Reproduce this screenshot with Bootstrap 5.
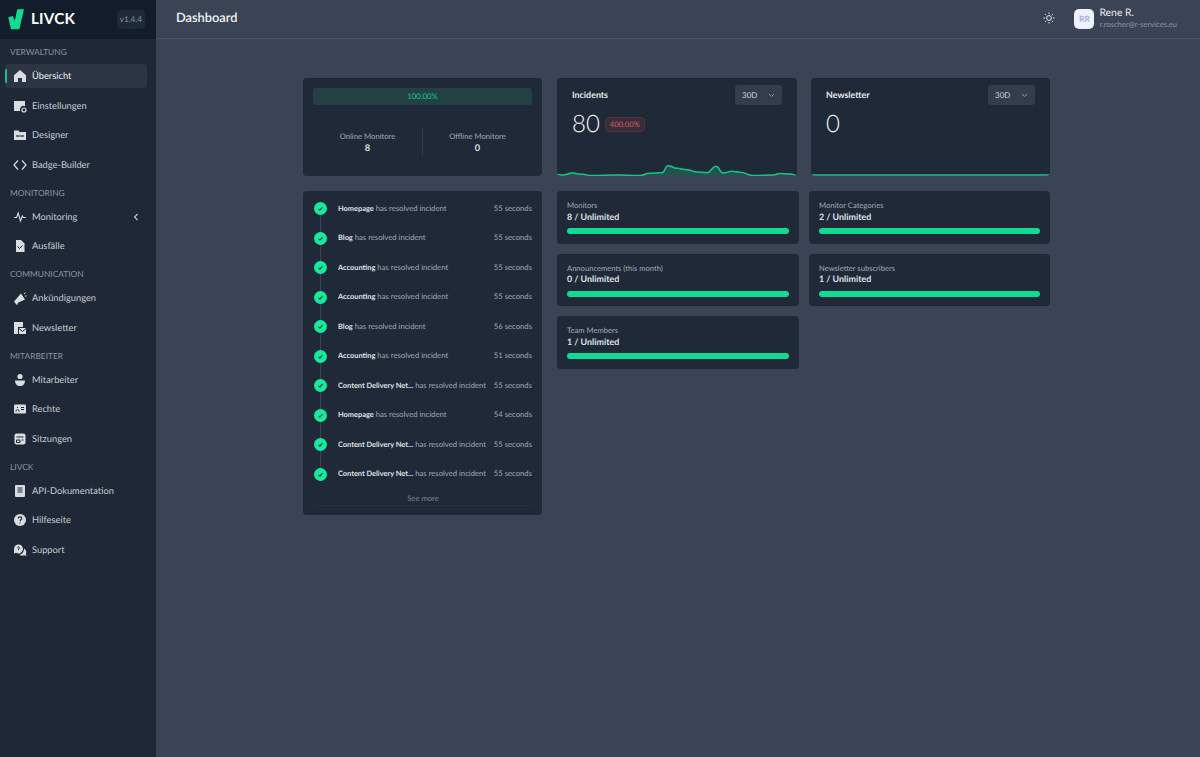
<!DOCTYPE html>
<html lang="en">

<head>
    <meta charset="UTF-8">
    <meta name="viewport" content="width=device-width, initial-scale=1.0">
    <title>Dashboard</title>
    <link rel="stylesheet" href="https://cdn.jsdelivr.net/npm/bootstrap@5.3.2/dist/css/bootstrap.min.css">
    <script src="https://cdn.jsdelivr.net/npm/bootstrap@5.3.2/dist/js/bootstrap.bundle.min.js"></script>

    <style>
        html, body { height: 100%; }
        body {
            margin: 0;
            background: #3a4454;
            font-family: "Lato", "Noto Sans", sans-serif;
            color: #dfe3e8;
            overflow: hidden;
            text-rendering: geometricPrecision;
        }
        .shell { height: 757px; }

        /* sidebar */
        .side { width: 156px; background: #1e2836; flex: none; }
        .brand { height: 39px; background: #131c2b; padding: 0 11px 0 8px; }
        .brand-name { font-size: 15.2px; font-weight: 700; color: #fff; letter-spacing: .2px; margin-left: 6px; }
        .ver { font-size: 8.2px; color: #8b95a3; background: #1e2a39; border-radius: 4px; padding: 3px 3px; }
        .side-head { font-size: 8.4px; color: #8b95a3; padding: 0 10px; height: 11.5px; line-height: 11.5px; text-transform: uppercase; }
        .side-link {
            height: 24px; margin: 0 9px 0 5px; padding: 0 8px; border-radius: 4px;
            font-size: 9.3px; color: #c6ccd4; text-decoration: none;
        }
        .side-link svg.ico { width: 14px; height: 14px; margin-right: 5px; flex: none; fill: #d8dde3; }
        .side-link.on { background: #2b3544; color: #eef0f3; position: relative; }
        .side-link.on::before {
            content: ""; position: absolute; left: 0; top: 5px; width: 2px; height: 14px;
            background: #10c58a; border-radius: 1px;
        }
        .nav-stack { padding-top: 8px; }
        .nav-group { margin-bottom: 11px; }
        .nav-group .side-link { margin-top: 5.5px; }

        /* top bar */
        .topbar { height: 39px; border-bottom: 1px solid #4a5362; padding: 0 23px 2px 20px; }
        .page-title { font-size: 12.8px; font-weight: 600; color: #f0f2f4; }
        .sun { margin-right: 19px; }
        .avatar { width: 20px; height: 20px; border-radius: 5px; background: #eef2ff; color: #8ea0e6; font-size: 8.6px; margin-top: 2px; margin-right: 5px; }
        .user-name { font-size: 10.4px; line-height: 12px; color: #e4e7eb; }
        .user-mail { font-size: 7.6px; line-height: 10px; color: #8b95a3; }

        /* dashboard */
        .dash { width: 747px; margin: 39px 0 0 147px; display: grid; grid-template-columns: 239px 494px; column-gap: 15px; align-items: start; }
        .tile { background: #1f2937; border-radius: 4px; }
        .uptime { height: 98px; padding: 10px; }
        .up-bar { height: 17px; background: #234042; border-radius: 3px; color: #10c58a; font-size: 7.8px; }
        .pair { margin-top: 22px; }
        .pair > div { flex: 1; height: 29px; padding-top: 3px; }
        .pair > div + div { border-left: 1px solid #323c4b; }
        .pair-label { font-size: 7.7px; line-height: 12px; color: #a3abb6; }
        .pair-val { font-size: 9.2px; line-height: 12px; font-weight: 700; color: #dfe3e8; }

        .feed { margin-top: 15px; padding: 3px 10px 6px 11px; height: 324px; }
        .feed-row { height: 29.5px; position: relative; font-size: 7.7px; color: #a3abb6; }
        .feed-row strong { color: #dfe3e8; font-weight: 700; font-size: 7.4px; }
        .feed-row:not(:nth-last-child(2))::after {
            content: ""; position: absolute; left: 6px; top: 20px; width: 1px; height: 20px; background: #3a4454;
        }
        .tick { width: 13px; height: 13px; border-radius: 50%; background: #14eb9f; margin-right: 11px; flex: none; position: relative; z-index: 1; }
        .feed-text { flex: 1; white-space: nowrap; overflow: hidden; }
        .see-more { font-size: 7.7px; color: #7e8794; border-bottom: 1px solid #263140; height: 16px; line-height: 16px; margin-top: 1px; }

        .stats { display: grid; grid-template-columns: 240px 239px; column-gap: 14px; }
        .stat { height: 98px; position: relative; overflow: hidden; padding: 7px 15px; }
        .stat-title { font-size: 8.9px; font-weight: 700; color: #e4e7eb; }
        .range { width: 47px; height: 20px; background: #333d4c; border-radius: 3px; font-size: 8px; color: #c6ccd4; padding: 0 7px; }
        .stat-num { font-size: 24px; line-height: 28px; color: #f3f4f6; font-weight: 300; margin-top: 5px; }
        .pct { font-size: 7.6px; color: #d9596a; background: #3a2c38; border: 1px solid #4a3440; border-radius: 4px; padding: 1px 4px; margin: 6px 0 0 5px; }
        .spark { position: absolute; left: 0; bottom: 0; width: 100%; height: 24px; display: block; }

        .limits { margin-top: 15px; display: grid; grid-template-columns: 242px 241px; column-gap: 10px; row-gap: 10px; }
        .limit { height: 52.5px; padding: 9px 10px 0; }
        .limit-label { font-size: 7.6px; line-height: 10.5px; color: #a3abb6; }
        .limit-val { font-size: 8.9px; line-height: 11px; font-weight: 700; color: #dfe3e8; }
        .limit-track { height: 6px; margin-top: 6.5px; background: #0fdc92; border-radius: 3px; }
    </style>
</head>

<body>
    <div class="shell d-flex">
        <!-- Sidebar -->
        <aside class="side d-flex flex-column">
            <div class="brand d-flex align-items-center">
                <svg width="17" height="21" viewBox="0 0 17 21"><path d="M.3 8.3 4.7 7 6.7 11.7 9.3 .3H16L11.3 20.3H3Z" fill="#10dc92"/></svg>
                <span class="brand-name">LIVCK</span>
                <span class="ver ms-auto">v1.4.4</span>
            </div>
            <nav class="nav-stack">
                <div class="nav-group">
                    <div class="side-head">Verwaltung</div>
                    <a class="side-link on d-flex align-items-center" href="#"><svg class="ico" viewBox="0 0 14 14"><path d="M7 1 13 6.2V13H9V9H5V13H1V6.2Z"/></svg>Übersicht</a>
                    <a class="side-link d-flex align-items-center" href="#"><svg class="ico" viewBox="0 0 14 14"><path d="M1 2H12V7.2A3.6 3.6 0 0 0 7.2 12H1Z"/><circle cx="11" cy="11" r="2" fill="none" stroke="#d8dde3" stroke-width="1.2"/></svg>Einstellungen</a>
                    <a class="side-link d-flex align-items-center" href="#"><svg class="ico" viewBox="0 0 14 14"><path d="M1 2.5H5.5L6.5 4H13V12H1Z"/><path d="M4 8H10M4 7V9M10 7V9" stroke="#1e2836" stroke-width="1" fill="none"/></svg>Designer</a>
                    <a class="side-link d-flex align-items-center" href="#"><svg class="ico" viewBox="0 0 14 14"><path d="M5 2.5 1 7 5 11.5M9 2.5 13 7 9 11.5" fill="none" stroke="#d8dde3" stroke-width="1.2"/></svg>Badge-Builder</a>
                </div>
                <div class="nav-group">
                    <div class="side-head">Monitoring</div>
                    <a class="side-link d-flex align-items-center" href="#"><svg class="ico" viewBox="0 0 14 14"><path d="M1 7.5H3.5L5.2 3 7.5 11 9.3 6 10.2 7.5H13" fill="none" stroke="#d8dde3" stroke-width="1.1"/></svg>Monitoring<svg class="ms-auto" width="6" height="8" viewBox="0 0 6 8"><path d="M4.5 1 1.5 4 4.5 7" fill="none" stroke="#c6ccd4" stroke-width="1.1"/></svg></a>
                    <a class="side-link d-flex align-items-center" href="#"><svg class="ico" viewBox="0 0 14 14"><path d="M3 1H8L11.5 4.5V13H3Z"/><path d="M4.5 7.5 6.5 9.5 9.5 6.5" stroke="#1e2836" stroke-width="1" fill="none"/></svg>Ausfälle</a>
                </div>
                <div class="nav-group">
                    <div class="side-head">Communication</div>
                    <a class="side-link d-flex align-items-center" href="#"><svg class="ico" viewBox="0 0 14 14"><path d="M1 10.5 8 2.5 12 8.5 4.5 12 5 13.5 3 13.5 2.4 12.2Z"/><path d="M11 3 12.5 1.5M12 5H13.5" stroke="#d8dde3" fill="none"/></svg>Ankündigungen</a>
                    <a class="side-link d-flex align-items-center" href="#"><svg class="ico" viewBox="0 0 14 14"><path d="M1 1H10V6H5V13H1Z"/><path d="M6 7H13V13H6Z"/><path d="M6 7.5 9.5 10.5 13 7.5" stroke="#1e2836" fill="none"/></svg>Newsletter</a>
                </div>
                <div class="nav-group">
                    <div class="side-head">Mitarbeiter</div>
                    <a class="side-link d-flex align-items-center" href="#"><svg class="ico" viewBox="0 0 14 14"><circle cx="7" cy="3.5" r="2.6"/><path d="M2 7.5H12C12 11 10 13 7 13S2 11 2 7.5Z"/></svg>Mitarbeiter</a>
                    <a class="side-link d-flex align-items-center" href="#"><svg class="ico" viewBox="0 0 14 14"><rect x="1" y="2.5" width="12" height="9" rx="1"/><path d="M3 9.5C3 7 6 7 6 9.5M4.5 5V6M8 5.5H11M8 7.5H11" stroke="#1e2836" fill="none"/></svg>Rechte</a>
                    <a class="side-link d-flex align-items-center" href="#"><svg class="ico" viewBox="0 0 14 14"><rect x="1.5" y="1.5" width="11" height="11" rx="2"/><path d="M3.5 5H10.5M3.5 8H7V10.5H3.5ZM8.5 8H10.5" stroke="#1e2836" fill="none"/></svg>Sitzungen</a>
                </div>
                <div class="nav-group">
                    <div class="side-head">LIVCK</div>
                    <a class="side-link d-flex align-items-center" href="#"><svg class="ico" viewBox="0 0 14 14"><rect x="2" y="1" width="10" height="12" rx="1"/><path d="M4.5 4H9.5M4.5 6H9.5M4.5 8H9.5" stroke="#1e2836" fill="none"/></svg>API-Dokumentation</a>
                    <a class="side-link d-flex align-items-center" href="#"><svg class="ico" viewBox="0 0 14 14"><circle cx="7" cy="7" r="6"/><path d="M5.3 5.4C5.3 3.4 8.8 3.4 8.8 5.4 8.8 6.8 7 6.6 7 8.2M7 9.4V10.6" stroke="#1e2836" stroke-width="1.1" fill="none"/></svg>Hilfeseite</a>
                    <a class="side-link d-flex align-items-center" href="#"><svg class="ico" viewBox="0 0 14 14"><path d="M1 6A4.5 4.5 0 0 1 10 6 4.5 4.5 0 0 1 3 9.7L1 10.5Z"/><path d="M11 5.5C13 6.5 14 9 12.8 11L13.5 13 11 12.3C9.5 13 7.5 12.8 6.5 11.5 9 11.5 11.3 8.8 11 5.5Z"/><path d="M4.5 4.8C4.8 3.4 6.8 3.8 6.2 5.2 5.8 5.8 5.5 6 5.5 7" stroke="#1e2836" fill="none"/></svg>Support</a>
                </div>
            </nav>
        </aside>

        <div class="flex-grow-1">
            <!-- Top bar -->
            <header class="topbar d-flex align-items-center">
                <span class="page-title">Dashboard</span>
                <svg class="sun ms-auto" width="12" height="12" viewBox="0 0 12 12" fill="none" stroke="#dfe3e8" stroke-width="1"><circle cx="6" cy="6" r="2.4"/><path d="M6 .5V2M6 10V11.5M.5 6H2M10 6H11.5M2.1 2.1 3.2 3.2M8.8 8.8 9.9 9.9M2.1 9.9 3.2 8.8M8.8 3.2 9.9 2.1"/></svg>
                <div class="avatar d-flex align-items-center justify-content-center">RR</div>
                <div>
                    <div class="user-name">Rene R.</div>
                    <div class="user-mail">r.roscher@r-services.eu</div>
                </div>
            </header>

            <!-- Dashboard -->
            <main class="dash">
                <div>
                    <section class="tile uptime">
                        <div class="up-bar d-flex align-items-center justify-content-center">100.00%</div>
                        <div class="pair d-flex text-center">
                            <div>
                                <div class="pair-label">Online Monitore</div>
                                <div class="pair-val">8</div>
                            </div>
                            <div>
                                <div class="pair-label">Offline Monitore</div>
                                <div class="pair-val">0</div>
                            </div>
                        </div>
                    </section>

                    <section class="tile feed" id="feed"></section>
                </div>

                <div>
                    <div class="stats">
                        <section class="tile stat">
                            <div class="d-flex align-items-center justify-content-between">
                                <span class="stat-title">Incidents</span>
                                <span class="range d-flex align-items-center justify-content-between">30D
                                    <svg width="7" height="5" viewBox="0 0 7 5"><path d="M1 1 3.5 3.5 6 1" fill="none" stroke="#8b95a3"/></svg>
                                </span>
                            </div>
                            <div class="d-flex align-items-center">
                                <span class="stat-num">80</span>
                                <span class="pct">400.00%</span>
                            </div>
                            <svg class="spark" viewBox="0 0 240 24">
                                <path id="sparkFill" fill="#24524d"/>
                                <path id="sparkLine" fill="none" stroke="#14c68c" stroke-width="1.5"/>
                            </svg>
                        </section>
                        <section class="tile stat">
                            <div class="d-flex align-items-center justify-content-between">
                                <span class="stat-title">Newsletter</span>
                                <span class="range d-flex align-items-center justify-content-between">30D
                                    <svg width="7" height="5" viewBox="0 0 7 5"><path d="M1 1 3.5 3.5 6 1" fill="none" stroke="#8b95a3"/></svg>
                                </span>
                            </div>
                            <div class="stat-num">0</div>
                            <svg class="spark" viewBox="0 0 240 24">
                                <path d="M0 23H240" fill="none" stroke="#14c68c" stroke-width="1.6"/>
                            </svg>
                        </section>
                    </div>

                    <div class="limits">
                        <section class="tile limit"><div class="limit-label">Monitors</div><div class="limit-val">8 / Unlimited</div><div class="limit-track"></div></section>
                        <section class="tile limit"><div class="limit-label">Monitor Categories</div><div class="limit-val">2 / Unlimited</div><div class="limit-track"></div></section>
                        <section class="tile limit"><div class="limit-label">Announcements (this month)</div><div class="limit-val">0 / Unlimited</div><div class="limit-track"></div></section>
                        <section class="tile limit"><div class="limit-label">Newsletter subscribers</div><div class="limit-val">1 / Unlimited</div><div class="limit-track"></div></section>
                        <section class="tile limit"><div class="limit-label">Team Members</div><div class="limit-val">1 / Unlimited</div><div class="limit-track"></div></section>
                    </div>
                </div>
            </main>
        </div>
    </div>

    <script>
        // Incident feed
        const rows = [
            ["Homepage", "55 seconds"], ["Blog", "55 seconds"], ["Accounting", "55 seconds"],
            ["Accounting", "55 seconds"], ["Blog", "56 seconds"], ["Accounting", "51 seconds"],
            ["Content Delivery Net...", "55 seconds"], ["Homepage", "54 seconds"],
            ["Content Delivery Net...", "55 seconds"], ["Content Delivery Net...", "55 seconds"]
        ];
        const tick = '<svg width="13" height="13" viewBox="0 0 13 13" class="d-block"><path d="M4.5 6.8 5.9 8.2 8.5 5" fill="none" stroke="#14342f" stroke-width="1.1"/></svg>';
        document.getElementById("feed").innerHTML = rows.map(r => `
            <div class="feed-row d-flex align-items-center">
                <span class="tick">${tick}</span>
                <span class="feed-text"><strong>${r[0]}</strong> has resolved incident</span>
                <span>${r[1]}</span>
            </div>`).join("") + '<div class="see-more text-center">See more</div>';

        // Sparkline, smoothed through the sampled points
        const pts = [[0,22.5],[6,23],[15,21],[26,22.3],[33,23.4],[60,23],[83,23.4],[93,21.2],[105,20.7],[111,13.7],[120,16.3],[130,17.7],[140,20],[150,20.7],[159,14.3],[166,21],[175,19.3],[183,20.3],[196,23.4],[216,23],[223,21.6],[233,22],[240,23.2]];
        let d = `M${pts[0][0]} ${pts[0][1]}`;
        for (let i = 1; i < pts.length; i++) {
            const midX = (pts[i - 1][0] + pts[i][0]) / 2;
            d += `C${midX} ${pts[i - 1][1]} ${midX} ${pts[i][1]} ${pts[i][0]} ${pts[i][1]}`;
        }
        document.getElementById("sparkLine").setAttribute("d", d);
        document.getElementById("sparkFill").setAttribute("d", d + "V24H0Z");
    </script>
</body>

</html>
